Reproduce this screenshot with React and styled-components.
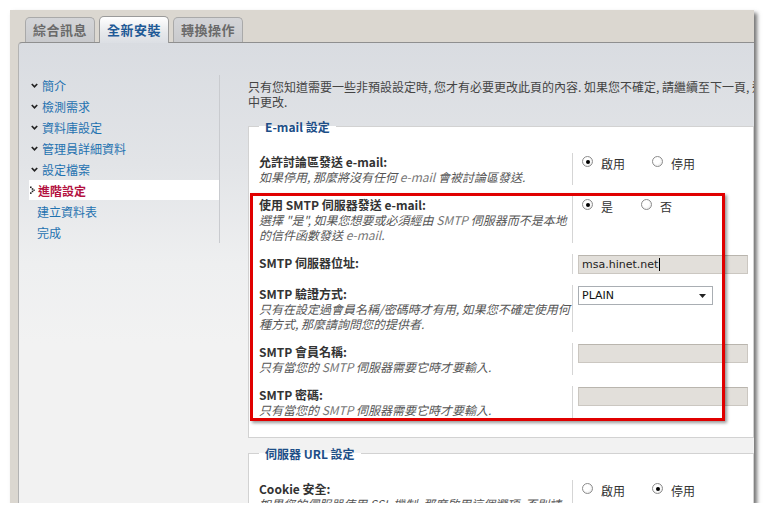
import React from "react";
import styled, { createGlobalStyle, css } from "styled-components";

const Global = createGlobalStyle`
  html, body { margin: 0; padding: 0; background: #ffffff; }
  body { font-family: "Noto Sans CJK TC", "DejaVu Sans", sans-serif; font-size: 12px; color: #333; }
  * { box-sizing: border-box; }
`;

const Window = styled.div`
  margin: 10px 0 0 10px;
  width: 744px;
  height: 493px;
  background: #dbd7d0;
  box-shadow: 3px 3px 4px rgba(0, 0, 0, 0.55);
  overflow: hidden;
  display: flex;
  flex-direction: column;
`;

const TabBar = styled.div`
  height: 32px;
  display: flex;
  align-items: flex-end;
  gap: 4px;
  padding-left: 15px;
  position: relative;
  z-index: 2;
`;

const Tab = styled.div`
  width: 70px;
  height: 25px;
  border: 1px solid #a9a9a9;
  border-bottom: none;
  border-radius: 5px 5px 0 0;
  background: linear-gradient(#d4d5d8, #c9cacd);
  color: #6a6a6a;
  font-weight: 700;
  font-size: 13px;
  line-height: 24px;
  text-align: center;
  letter-spacing: 0.5px;
  ${(p) =>
    p.$active &&
    css`
      height: 27px;
      margin-bottom: -1px;
      background: linear-gradient(#ffffff, #e6e8eb 60%, #dcdfe4);
      border-color: #9a9a9a;
      color: #1f5a96;
      line-height: 26px;
    `}
`;

const Panel = styled.div`
  flex: 1;
  margin-left: 8px;
  border-top: 1px solid #8f8f8f;
  border-left: 1px solid #b3b3b3;
  border-top-left-radius: 4px;
  background: linear-gradient(#d9dce1 0px, #e2e4e7 120px, #eeeff0 220px, #f2f2f2 300px);
  display: flex;
  min-height: 0;
`;

const Sidebar = styled.div`
  width: 201px;
  flex: none;
  padding-top: 32px;
`;

const NavList = styled.ul`
  list-style: none;
  margin: 0 0 0 10px;
  padding: 0;
  width: 191px;
  border-right: 1px solid #c9cbcf;
`;

const NavItem = styled.li`
  height: 21px;
  display: flex;
  align-items: center;
  gap: 3px;
  padding-left: ${(p) => (p.$plain ? "8px" : "1px")};
  color: #1f72b0;
  font-size: 12px;
  ${(p) =>
    p.$active &&
    css`
      background: #ffffff;
      color: #b3113f;
      font-weight: 700;
      height: 20px;
      margin-bottom: 1px;
    `}
`;

const Icon = styled.svg`
  flex: none;
  display: block;
`;

const DoneIcon = () => (
  <Icon width="9" height="7" viewBox="0 0 9 7">
    <polyline points="1.8,2 4.5,4.8 7.2,2" fill="none" stroke="#222" strokeWidth="1.7" />
  </Icon>
);

const CurrentIcon = () => (
  <Icon width="5" height="8" viewBox="0 0 5 8">
    <rect x="0" y="0.5" width="1.6" height="1.6" fill="#222" />
    <rect x="1.7" y="2.2" width="1.6" height="1.6" fill="#222" />
    <rect x="3.3" y="3.6" width="1.6" height="1.2" fill="#222" />
    <rect x="1.7" y="4.6" width="1.6" height="1.6" fill="#222" />
    <rect x="0" y="6.3" width="1.6" height="1.6" fill="#222" />
  </Icon>
);

const Main = styled.div`
  position: relative;
  margin-left: 28px;
  width: 506px;
  flex: none;
  padding-top: 36px;
`;

const Intro = styled.p`
  margin: 0;
  line-height: 15px;
  color: #444;
  white-space: nowrap;
`;

const Fieldset = styled.fieldset`
  margin: ${(p) => (p.$first ? "10px" : "8px")} 0 0;
  padding: 0 4px 19px 10px;
  border: 1px solid #d2d2d2;
  background: #ffffff;
  min-width: 0;
`;

const Legend = styled.legend`
  padding: 0 6px;
  margin-left: 0;
  font-weight: 700;
  color: #1d4e87;
  line-height: 15px;
  font-size: 12px;
`;

const Rows = styled.div`
  display: flex;
  flex-direction: column;
  gap: 11px;
  padding-top: 19px;
`;

const Row = styled.div`
  display: grid;
  grid-template-columns: 314px 1fr;
`;

const Term = styled.div`
  border-right: 1px solid #d5d5d5;
  padding: 1px 4px 1px 0;
`;

const Label = styled.div`
  font-weight: 700;
  color: #333;
  line-height: 15px;
  white-space: nowrap;
`;

const Desc = styled.div`
  font-style: italic;
  color: #555;
  line-height: 15px;
  font-size: 12px;
  white-space: nowrap;
`;

const Latin = styled.span`
  color: #777;
`;

const Value = styled.div`
  padding: 1px 0 0 4px;
  display: flex;
  align-items: flex-start;
`;

const RadioGroup = styled.div`
  display: flex;
  gap: ${(p) => p.$gap || 27}px;
  padding: 2px 0 0 5px;
`;

const RadioLabel = styled.label`
  display: flex;
  align-items: flex-start;
  gap: 8px;
  line-height: 16px;
  color: #333;
`;

const RadioDot = styled.span`
  width: 11px;
  height: 11px;
  border-radius: 50%;
  border: 1px solid #8c8c8c;
  background: radial-gradient(circle at 40% 40%, #ffffff 40%, #dedede 100%);
  display: flex;
  align-items: center;
  justify-content: center;
  flex: none;
  &::after {
    content: "";
    width: 4px;
    height: 4px;
    border-radius: 50%;
    background: ${(p) => (p.$checked ? "#000" : "transparent")};
  }
`;

const TextBox = styled.div`
  width: 170px;
  height: 19px;
  margin-left: 1px;
  background: #e2dfda;
  border: 1px solid #cbc7c1;
  border-top-color: #b9b5ae;
  font-family: "DejaVu Sans", sans-serif;
  font-size: 11px;
  line-height: 17px;
  padding-left: 3px;
  color: #222;
  display: flex;
  align-items: center;
`;

const Caret = styled.span`
  width: 1px;
  height: 13px;
  background: #000;
  margin-left: 1px;
`;

const SelectBox = styled.div`
  width: 135px;
  height: 19px;
  margin-left: 1px;
  background: #ffffff;
  border: 1px solid #a9aeb3;
  font-family: "DejaVu Sans", sans-serif;
  font-size: 11px;
  color: #111;
  display: flex;
  align-items: center;
  justify-content: space-between;
  padding: 0 6px 0 3px;
`;

const Highlight = styled.div`
  position: absolute;
  left: 2px;
  top: 150px;
  width: 475px;
  height: 228px;
  border: 3px solid #e00000;
  box-shadow: 2px 2px 3px rgba(0, 0, 0, 0.4);
  pointer-events: none;
`;

const Radio = ({ checked, children }) => (
  <RadioLabel>
    <RadioDot $checked={checked} />
    {children}
  </RadioLabel>
);

const navItems = [
  { t: "簡介", s: "done" },
  { t: "檢測需求", s: "done" },
  { t: "資料庫設定", s: "done" },
  { t: "管理員詳細資料", s: "done" },
  { t: "設定檔案", s: "done" },
  { t: "進階設定", s: "active" },
  { t: "建立資料表", s: "plain" },
  { t: "完成", s: "plain" },
];

export default function App() {
  return (
    <>
      <Global />
      <Window>
        <TabBar>
          <Tab>綜合訊息</Tab>
          <Tab $active>全新安裝</Tab>
          <Tab>轉換操作</Tab>
        </TabBar>
        <Panel>
          <Sidebar>
            <NavList>
              {navItems.map((n) => (
                <NavItem key={n.t} $active={n.s === "active"} $plain={n.s === "plain"}>
                  {n.s === "done" && <DoneIcon />}
                  {n.s === "active" && <CurrentIcon />}
                  {n.t}
                </NavItem>
              ))}
            </NavList>
          </Sidebar>
          <Main>
            <Intro>
              只有您知道需要一些非預設設定時, 您才有必要更改此頁的內容. 如果您不確定, 請繼續至下一頁, 這些設定可以稍後在管理控制台
              <br />
              中更改.
            </Intro>
            <Fieldset $first>
              <Legend>E-mail 設定</Legend>
              <Rows>
                <Row>
                  <Term>
                    <Label>允許討論區發送 e-mail:</Label>
                    <Desc>如果停用, 那麼將沒有任何 <Latin>e-mail</Latin> 會被討論區發送.</Desc>
                  </Term>
                  <Value>
                    <RadioGroup>
                      <Radio checked>啟用</Radio>
                      <Radio>停用</Radio>
                    </RadioGroup>
                  </Value>
                </Row>
                <Row>
                  <Term>
                    <Label>使用 SMTP 伺服器發送 e-mail:</Label>
                    <Desc>
                      選擇 "是", 如果您想要或必須經由 <Latin>SMTP</Latin> 伺服器而不是本地
                      <br />
                      的信件函數發送 <Latin>e-mail</Latin>.
                    </Desc>
                  </Term>
                  <Value>
                    <RadioGroup $gap={28}>
                      <Radio checked>是</Radio>
                      <Radio>否</Radio>
                    </RadioGroup>
                  </Value>
                </Row>
                <Row>
                  <Term>
                    <Label>SMTP 伺服器位址:</Label>
                  </Term>
                  <Value>
                    <TextBox>
                      msa.hinet.net
                      <Caret />
                    </TextBox>
                  </Value>
                </Row>
                <Row>
                  <Term>
                    <Label>SMTP 驗證方式:</Label>
                    <Desc>
                      只有在設定過會員名稱/密碼時才有用, 如果您不確定使用何
                      <br />
                      種方式, 那麼請詢問您的提供者.
                    </Desc>
                  </Term>
                  <Value>
                    <SelectBox>
                      PLAIN
                      <Icon width="7" height="4" viewBox="0 0 7 4">
                        <polygon points="0,0 7,0 3.5,4" fill="#222" />
                      </Icon>
                    </SelectBox>
                  </Value>
                </Row>
                <Row>
                  <Term>
                    <Label>SMTP 會員名稱:</Label>
                    <Desc>只有當您的 <Latin>SMTP</Latin> 伺服器需要它時才要輸入.</Desc>
                  </Term>
                  <Value>
                    <TextBox />
                  </Value>
                </Row>
                <Row>
                  <Term>
                    <Label>SMTP 密碼:</Label>
                    <Desc>只有當您的 <Latin>SMTP</Latin> 伺服器需要它時才要輸入.</Desc>
                  </Term>
                  <Value>
                    <TextBox />
                  </Value>
                </Row>
              </Rows>
            </Fieldset>
            <Fieldset>
              <Legend>伺服器 URL 設定</Legend>
              <Rows>
                <Row>
                  <Term>
                    <Label>Cookie 安全:</Label>
                    <Desc>如果您的伺服器使用 SSL 機制, 那麼啟用這個選項, 否則請</Desc>
                  </Term>
                  <Value>
                    <RadioGroup>
                      <Radio>啟用</Radio>
                      <Radio checked>停用</Radio>
                    </RadioGroup>
                  </Value>
                </Row>
              </Rows>
            </Fieldset>
            <Highlight />
          </Main>
        </Panel>
      </Window>
    </>
  );
}
